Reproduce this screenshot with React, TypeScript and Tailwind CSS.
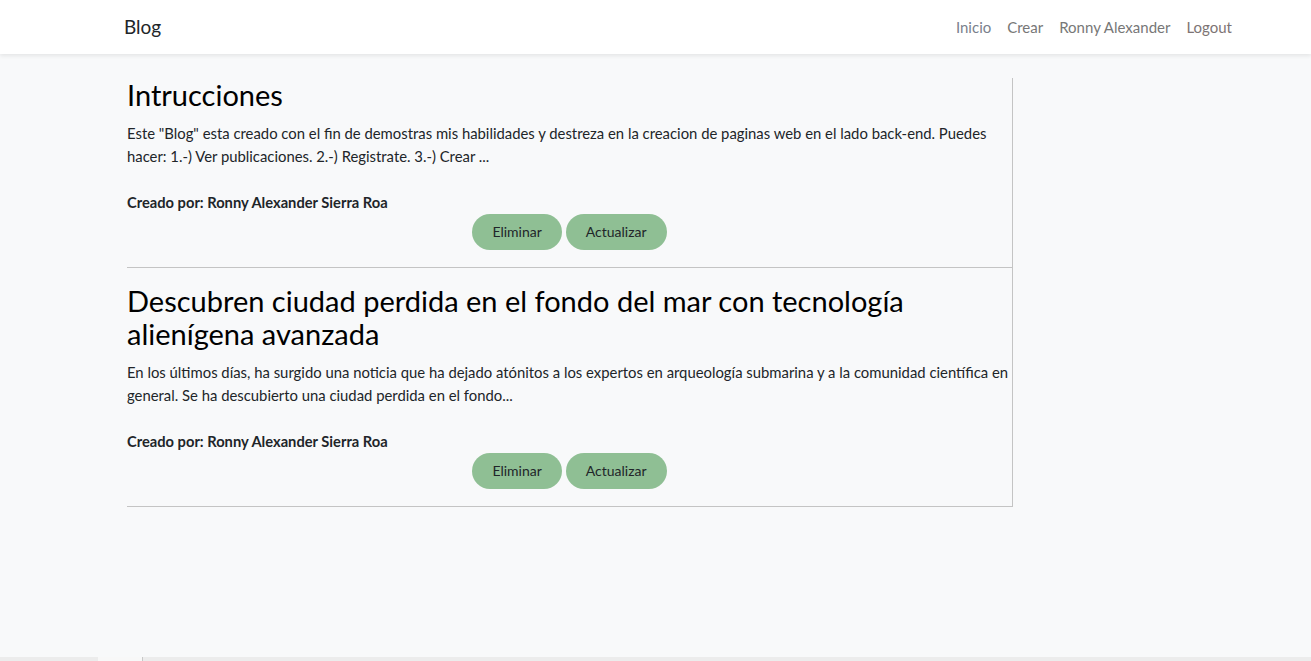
import React from "react";

const posts = [
  {
    title: "Intrucciones",
    body: 'Este "Blog" esta creado con el fin de demostras mis habilidades y destreza en la creacion de paginas web en el lado back-end. Puedes hacer: 1.-) Ver publicaciones. 2.-) Registrate. 3.-) Crear ...',
  },
  {
    title: "Descubren ciudad perdida en el fondo del mar con tecnología alienígena avanzada",
    body: "En los últimos días, ha surgido una noticia que ha dejado atónitos a los expertos en arqueología submarina y a la comunidad científica en general. Se ha descubierto una ciudad perdida en el fondo...",
  },
];

export default function App() {
  return (
    <div
      className="min-h-screen flex flex-col bg-[#f8f9fa] text-[#212529]"
      style={{ fontFamily: "Lato, 'Noto Sans', sans-serif" }}
    >
      <nav className="h-[54px] bg-white shadow-[0_2px_4px_rgba(0,0,0,0.08)] flex items-center justify-between pl-[124px] pr-[79px] relative z-10">
        <span className="text-[19px] text-[#212529]">Blog</span>
        <div className="flex items-center gap-[16px] text-[15px] text-[#777]">
          <span className="text-[#7a7f8c]">Inicio</span>
          <span>Crear</span>
          <span>Ronny Alexander</span>
          <span className="text-[#7d7474]">Logout</span>
        </div>
      </nav>
      <main className="flex-1 pt-[24px] pl-[127px]">
        <div className="w-[886px]">
          {posts.map((p, i) => (
            <div
              key={i}
              className={`border-b border-r border-[#c4c4c4] pb-[17px] ${i === 0 ? "pt-0" : "pt-[16px]"}`}
            >
              <h3 className="text-[29px] leading-[33.6px] mb-[10px] pr-2 text-black">{p.title}</h3>
              <p className="text-[14.85px] leading-[23.5px] mb-[21px]">{p.body}</p>
              <div className="text-[14.7px] leading-[24px] font-bold">Creado por: Ronny Alexander Sierra Roa</div>
              <div className="flex justify-center gap-[4px]">
                <button className="h-[36px] px-[20px] rounded-full bg-[#8fbf94] text-[14px] text-[#212529]">Eliminar</button>
                <button className="h-[36px] px-[20px] rounded-full bg-[#8fbf94] text-[14px] text-[#212529]">Actualizar</button>
              </div>
            </div>
          ))}
        </div>
      </main>
      <div className="h-[4px] flex bg-[#ececec]">
        <div className="w-[98px]" />
        <div className="w-[44px] bg-[#f8f8f8]" />
        <div className="w-[1px] bg-[#c8c8c8]" />
      </div>
    </div>
  );
}
